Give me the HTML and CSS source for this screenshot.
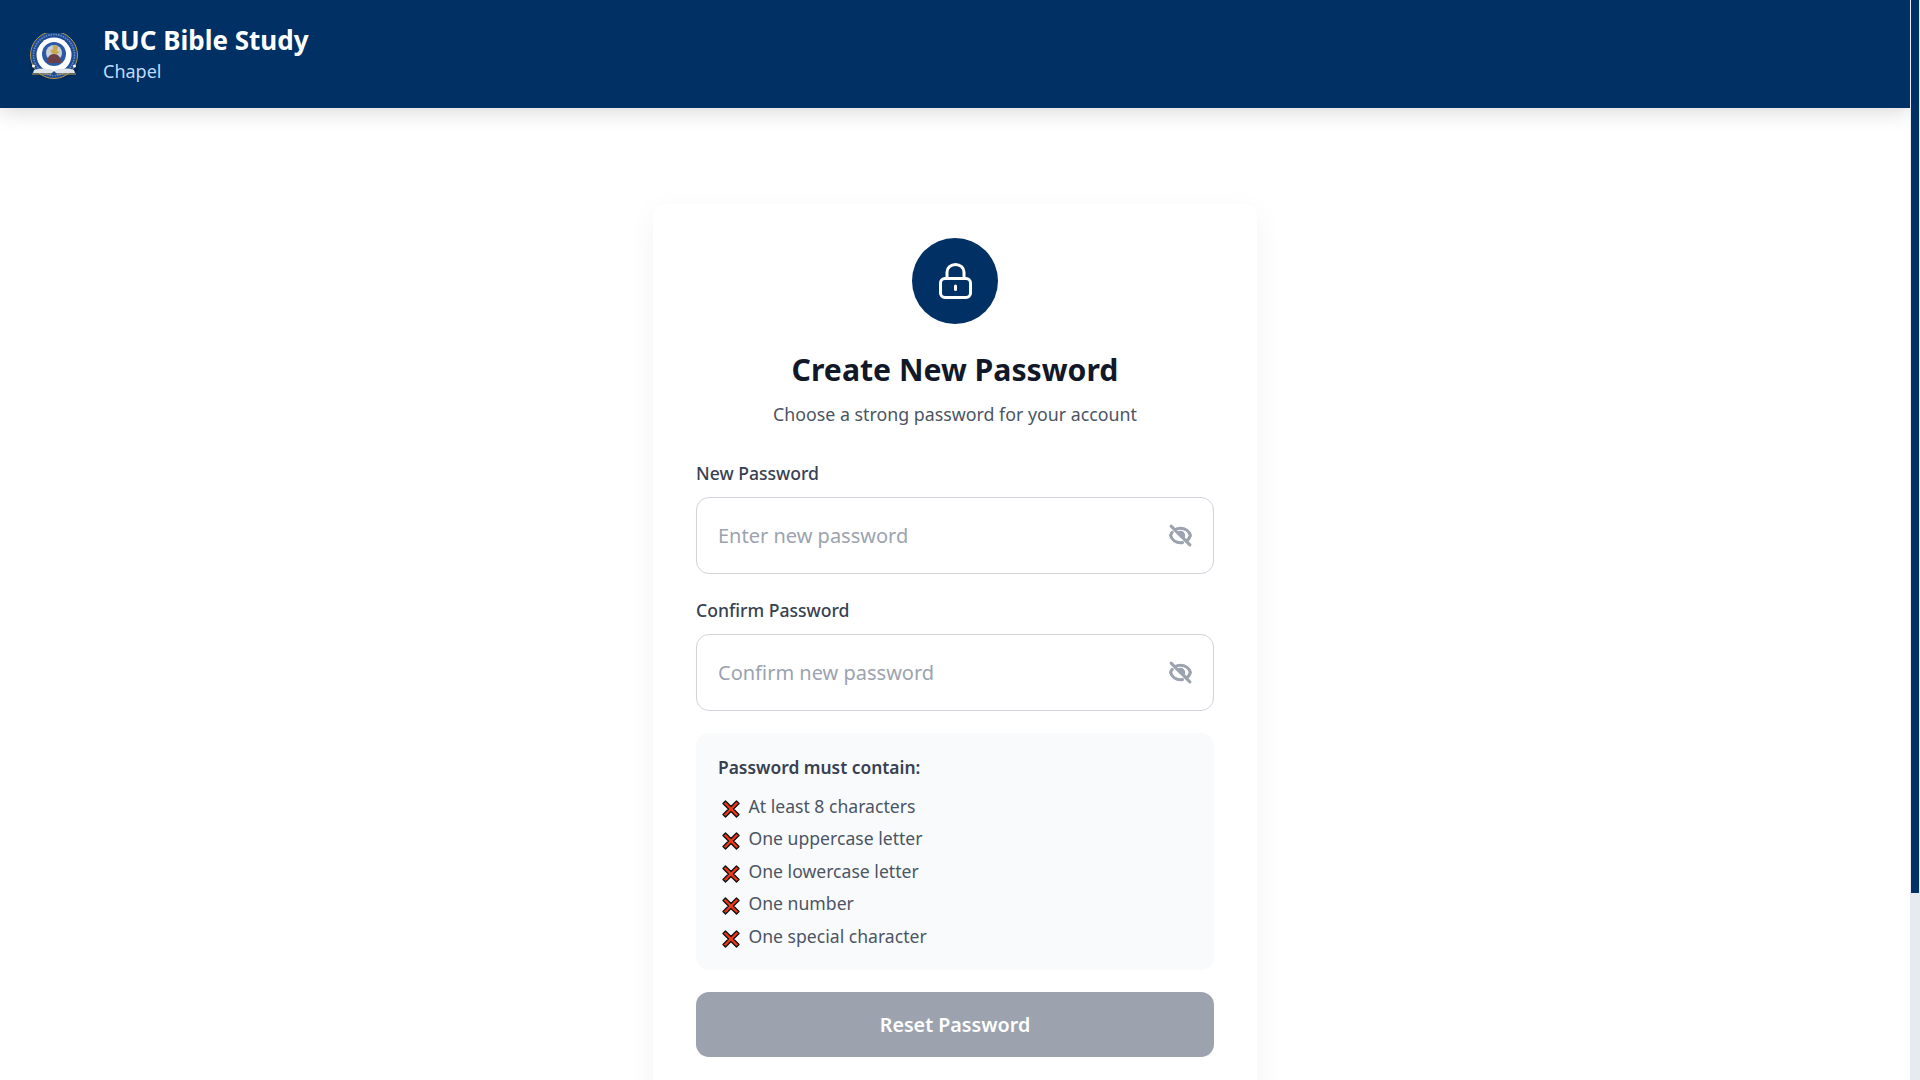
FILE: index.html
```html
<!DOCTYPE html>
<html lang="en">
<head>
  <meta charset="UTF-8">
  <title>Create New Password - RUC Bible Study</title>
  <meta name="viewport" content="width=device-width, initial-scale=1.0">
  <link rel="stylesheet" href="styles.css">
</head>
<body>

<header class="topbar">
  <svg class="logo" viewBox="0 0 50 46" aria-hidden="true">
    <ellipse cx="25" cy="33" rx="25" ry="14" fill="#012a58"/>
    <circle cx="25" cy="22" r="23.500" fill="#1d4c94" stroke="#b99a45" stroke-width="1"/>
    <circle cx="25" cy="22" r="20.500" fill="none" stroke="#6f8cc0" stroke-width="1.600" stroke-dasharray="1.500 1"/>
    <circle cx="25" cy="22" r="17.500" fill="#fff"/>
    <circle cx="25" cy="21" r="12" fill="#2a5aa5"/>
    <circle cx="25" cy="20" r="8" fill="#c9cfdc"/>
    <path d="M24 12l5 1-1 5 3 1-3 2h-4l-3-3 3-2z" fill="#c9a94c"/>
    <path d="M18 30c0-6 3-9 7-9s7 3 7 9z" fill="#6d4048"/>
    <circle cx="4.500" cy="33" r="1.500" fill="#fff"/>
    <circle cx="45.500" cy="33" r="1.500" fill="#fff"/>
    <path d="M5 37c7-2 15-2 20 1 5-3 13-3 20-1l1 3H4z" fill="#dfe4ea"/>
    <path d="M3 41h44" stroke="#c9a94c" stroke-width="1"/>
    <path d="M22 41l3-3 3 3-3 2z" fill="#1d4c94"/>
  </svg>
  <div class="marca">
    <div class="marca-nombre">RUC Bible Study</div>
    <div class="marca-sub">Chapel</div>
  </div>
</header>

<main class="contenido">
  <section class="tarjeta">
    <div class="candado">
      <svg width="33" height="36" viewBox="0 0 33 36" fill="none" stroke="#fff" stroke-width="3">
        <rect x="1.500" y="15.500" width="30" height="19" rx="4.500"/>
        <path d="M8 15.500V9a8.500 7.500 0 0 1 17 0v6.500"/>
        <path d="M16.500 23v3.500" stroke-linecap="round"/>
      </svg>
    </div>
    <h1>Create New Password</h1>
    <p class="subtitulo">Choose a strong password for your account</p>

    <label class="etiqueta" for="nueva">New Password</label>
    <div class="campo">
      <input id="nueva" type="password" placeholder="Enter new password">
      <svg class="ojo" viewBox="0 0 24 24" fill="none" stroke="currentColor" stroke-width="3" stroke-linecap="round" stroke-linejoin="round"><path d="M13.875 18.825A10.05 10.05 0 0112 19c-4.478 0-8.268-2.943-9.543-7a9.97 9.97 0 011.563-3.029m5.858.908a3 3 0 114.243 4.243M9.878 9.878l4.242 4.242M9.88 9.88l-3.29-3.290m7.532 7.532l3.290 3.290M3 3l3.590 3.590m0 0A9.953 9.953 0 0112 5c4.478 0 8.268 2.943 9.543 7a10.025 10.025 0 01-4.132 5.411m0 0L21 21"/></svg>
    </div>

    <label class="etiqueta" for="confirmar">Confirm Password</label>
    <div class="campo">
      <input id="confirmar" type="password" placeholder="Confirm new password">
      <svg class="ojo" viewBox="0 0 24 24" fill="none" stroke="currentColor" stroke-width="3" stroke-linecap="round" stroke-linejoin="round"><path d="M13.875 18.825A10.05 10.05 0 0112 19c-4.478 0-8.268-2.943-9.543-7a9.97 9.97 0 011.563-3.029m5.858.908a3 3 0 114.243 4.243M9.878 9.878l4.242 4.242M9.88 9.88l-3.29-3.290m7.532 7.532l3.290 3.290M3 3l3.590 3.590m0 0A9.953 9.953 0 0112 5c4.478 0 8.268 2.943 9.543 7a10.025 10.025 0 01-4.132 5.411m0 0L21 21"/></svg>
    </div>

    <div class="requisitos">
      <div class="requisitos-titulo">Password must contain:</div>
      <ul>
        <li><svg class="tache" viewBox="0 0 20 20"><path d="M2 4.500l2.500-2.500 5.500 5.500 5.500-5.500 2.500 2.500-5.500 5.500 5.500 5.500-2.500 2.500-5.500-5.500-5.500 5.500-2.500-2.500 5.500-5.500z" fill="#f03a17" stroke="#111" stroke-width="1.400" stroke-linejoin="round"/></svg>At least 8 characters</li>
        <li><svg class="tache" viewBox="0 0 20 20"><path d="M2 4.500l2.500-2.500 5.500 5.500 5.500-5.500 2.500 2.500-5.500 5.500 5.500 5.500-2.500 2.500-5.500-5.500-5.500 5.500-2.500-2.500 5.500-5.500z" fill="#f03a17" stroke="#111" stroke-width="1.400" stroke-linejoin="round"/></svg>One uppercase letter</li>
        <li><svg class="tache" viewBox="0 0 20 20"><path d="M2 4.500l2.500-2.500 5.500 5.500 5.500-5.500 2.500 2.500-5.500 5.500 5.500 5.500-2.500 2.500-5.500-5.500-5.500 5.500-2.500-2.500 5.500-5.500z" fill="#f03a17" stroke="#111" stroke-width="1.400" stroke-linejoin="round"/></svg>One lowercase letter</li>
        <li><svg class="tache" viewBox="0 0 20 20"><path d="M2 4.500l2.500-2.500 5.500 5.500 5.500-5.500 2.500 2.500-5.500 5.500 5.500 5.500-2.500 2.500-5.500-5.500-5.500 5.500-2.500-2.500 5.500-5.500z" fill="#f03a17" stroke="#111" stroke-width="1.400" stroke-linejoin="round"/></svg>One number</li>
        <li><svg class="tache" viewBox="0 0 20 20"><path d="M2 4.500l2.500-2.500 5.500 5.500 5.500-5.500 2.500 2.500-5.500 5.500 5.500 5.500-2.500 2.500-5.500-5.500-5.500 5.500-2.500-2.500 5.500-5.500z" fill="#f03a17" stroke="#111" stroke-width="1.400" stroke-linejoin="round"/></svg>One special character</li>
      </ul>
    </div>

    <button class="enviar" type="button" disabled>Reset Password</button>
  </section>
</main>

<div class="barra" aria-hidden="true"><div class="barra-pulgar"></div></div>

</body>
</html>
```

FILE: styles.css
```css
html { scrollbar-width: none; }
body { margin: 0; padding-right: 10px; font-family: "Noto Sans", "Open Sans", Arial, sans-serif; background: #fff; color: #111827; }

.topbar {
  display: flex; align-items: center; gap: 24px;
  height: 108px; padding: 0 0 0 29px;
  background: #003064;
  box-shadow: 0 4px 20px rgba(0, 0, 0, 0.15);
}
.logo { width: 50px; height: 46px; flex: none; margin-top: 4px; }
.marca { margin-top: 1px; }
.marca-nombre { font-size: 26px; font-weight: 700; line-height: 34px; color: #fff; }
.marca-sub { font-size: 18px; line-height: 29px; color: #bfdbfe; }

.contenido { display: flex; justify-content: center; padding: 96px 0 0; height: 1202px; box-sizing: border-box; }
.tarjeta {
  width: 604px; height: 1100px; box-sizing: border-box;
  padding: 34px 43px;
  background: #fff;
  border-radius: 13px;
  box-shadow: 0 8px 30px rgba(0, 0, 0, 0.05);
}
.candado {
  display: flex; align-items: center; justify-content: center;
  width: 86px; height: 86px; margin: 0 auto 24px;
  border-radius: 50%;
  background: #003064;
}
h1 { margin: 0 0 8px; font-size: 30.2px; line-height: 44px; font-weight: 700; text-align: center; color: #111827; }
.subtitulo { margin: 0 0 32px; font-size: 17.8px; line-height: 28px; text-align: center; color: #4b5563; }

.etiqueta { display: block; margin-bottom: 11px; font-size: 17.6px; line-height: 26px; font-weight: 500; color: #374151; }
.campo { position: relative; margin-bottom: 23px; }
.campo input {
  display: block; width: 100%; height: 77px; box-sizing: border-box;
  padding: 0 60px 0 21px;
  font-family: inherit; font-size: 20px;
  border: 1.5px solid #d1d5db; border-radius: 13px;
  outline: none;
}
.campo input::placeholder { color: #9ca3af; }
.ojo { position: absolute; right: 21px; top: 26px; width: 25px; height: 25px; color: #9ca3af; }

.requisitos { margin-top: -1px; padding: 21px 22px 15px; border-radius: 13px; background: #f9fafb; }
.requisitos-titulo { font-size: 17.4px; line-height: 26px; font-weight: 600; color: #374151; margin-bottom: 13px; }
.requisitos ul { list-style: none; margin: 0; padding: 0; }
.requisitos li { display: flex; align-items: flex-start; height: 32.4px; font-size: 17.6px; line-height: 26px; color: #4b5563; }
.tache { width: 20px; height: 20px; margin: 6px 8px 0 2.5px; flex: none; }

.enviar {
  display: block; width: 100%; height: 65px; margin-top: 22px;
  font-family: inherit; font-size: 19.7px; font-weight: 600; color: #fff;
  background: #9ca3af;
  border: none; border-radius: 13px;
}

/* la barra de desplazamiento no se pinta sola en el navegador sin ventana */
.barra { position: fixed; top: 0; right: 0; bottom: 0; width: 10px; background: #e6eaf1; }
.barra-pulgar { width: 8px; height: 893px; margin-left: 1px; background: #003064; }
```
